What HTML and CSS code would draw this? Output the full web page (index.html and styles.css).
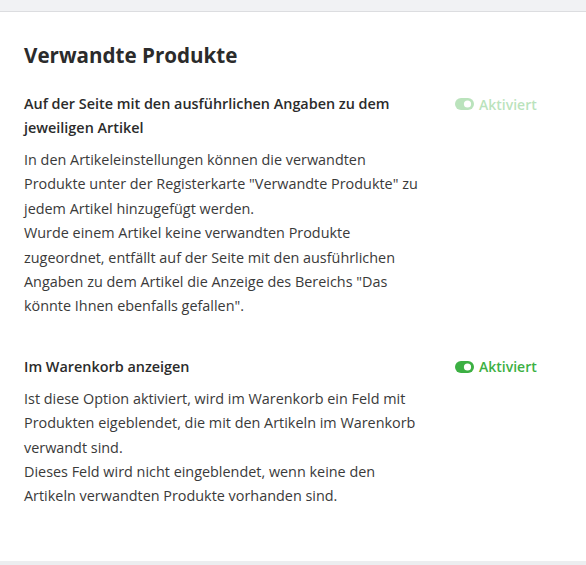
FILE: index.html
```html
<!DOCTYPE html>
<html lang="de">
<head>
<meta charset="utf-8">
<link rel="stylesheet" href="styles.css">
</head>
<body>
<div class="topbar"></div>
<div class="card">
  <h1 class="title">Verwandte Produkte</h1>
  <div class="setting">
    <div class="text">
      <h2 class="label">Auf der Seite mit den ausführlichen Angaben zu dem jeweiligen Artikel</h2>
      <p class="desc">In den Artikeleinstellungen können die verwandten Produkte unter der Registerkarte "Verwandte Produkte" zu jedem Artikel hinzugefügt werden.<br>Wurde einem Artikel keine verwandten Produkte zugeordnet, entfällt auf der Seite mit den ausführlichen Angaben zu dem Artikel die Anzeige des Bereichs "Das könnte Ihnen ebenfalls gefallen".</p>
    </div>
    <div class="status faded">
      <svg class="toggle" width="19" height="12" viewBox="0 0 19 12"><rect x="0" y="0" width="19" height="12" rx="6" fill="#3cb043"/><circle cx="12.5" cy="6" r="3.6" fill="#fff"/></svg>
      <span>Aktiviert</span>
    </div>
  </div>
  <div class="setting second">
    <div class="text">
      <h2 class="label">Im Warenkorb anzeigen</h2>
      <p class="desc">Ist diese Option aktiviert, wird im Warenkorb ein Feld mit Produkten eigeblendet, die mit den Artikeln im Warenkorb verwandt sind.<br>Dieses Feld wird nicht eingeblendet, wenn keine den Artikeln verwandten Produkte vorhanden sind.</p>
    </div>
    <div class="status">
      <svg class="toggle" width="19" height="12" viewBox="0 0 19 12"><rect x="0" y="0" width="19" height="12" rx="6" fill="#3cb043"/><circle cx="12.5" cy="6" r="3.6" fill="#fff"/></svg>
      <span>Aktiviert</span>
    </div>
  </div>
</div>
<div class="bottombar"></div>
</body>
</html>
```
FILE: styles.css
```css
html, body {
  margin: 0;
  padding: 0;
  background: #f1f2f4;
}
body {
  font-family: "Open Sans", "Noto Sans", sans-serif;
  color: #333;
  height: 565px;
  overflow: hidden;
}
.topbar {
  height: 11px;
  background: #f1f2f4;
  border-bottom: 1px solid #dcdde0;
}
.card {
  background: #fff;
  height: 549px;
  padding: 30px 24px 0 24px;
  box-sizing: border-box;
}
.title {
  margin: 0;
  font-size: 20.6px;
  line-height: 26px;
  font-weight: 700;
  color: #2b2b2b;
}
.setting {
  display: flex;
  align-items: flex-start;
  margin-top: 24px;
}
.setting.second {
  margin-top: 36px;
}
.text {
  width: 400px;
}
.label {
  margin: 0;
  font-size: 14.4px;
  line-height: 24px;
  font-weight: 600;
  color: #2b2b2b;
}
.desc {
  margin: 8px 0 0 0;
  font-size: 14.4px;
  line-height: 24.4px;
  color: #3a3a3a;
}
.status {
  margin-left: 31px;
  display: flex;
  align-items: center;
  gap: 5px;
  height: 24px;
  color: #3cb043;
  font-size: 14px;
  font-weight: 600;
}
.status.faded {
  opacity: 0.35;
}
.toggle {
  display: block;
}
.bottombar {
  height: 4px;
  background: #eceef0;
}
```
